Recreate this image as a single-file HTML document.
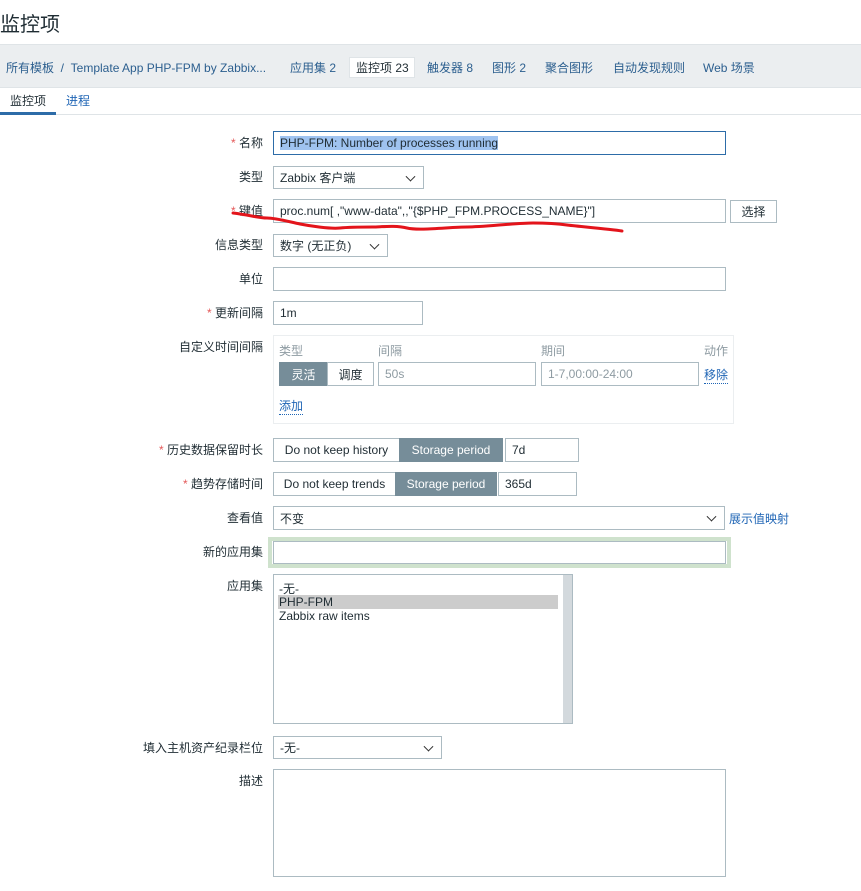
<!DOCTYPE html>
<html><head><meta charset="utf-8"><style>
*{box-sizing:border-box;margin:0;padding:0}
body{width:861px;height:891px;background:#fff;font-family:"Liberation Sans","Noto Sans CJK SC",sans-serif;font-size:12px;color:#1f2c33;position:relative;overflow:hidden}
.a{position:absolute}
.lbl{position:absolute;right:598px;text-align:right;white-space:nowrap;transform:translateY(-2px)}
.req:before{content:"* ";color:#e45959}
.in{position:absolute;border:1px solid #acbbc2;background:#fff;padding-left:6px;white-space:nowrap;display:flex;align-items:center}
.sel:after{content:"";position:absolute;right:9px;top:50%;width:6px;height:6px;border-right:1.3px solid #333;border-bottom:1.3px solid #333;transform:translateY(-70%) rotate(45deg)}
.tab{position:absolute;top:59px;color:#2c5f8f;font-size:12px}
.seg{position:absolute;display:flex;align-items:center;justify-content:center;border:1px solid #acbbc2}
.dark{background:#768d99;color:#fff;border-color:#768d99}
.lnk{color:#1f65b5;border-bottom:1px dotted #1f65b5}
.gray{color:#8e9ba2}
</style></head><body>
<div class="a" style="left:0;top:8px;font-size:20px;color:#1f2c33">监控项</div>
<div class="a" style="left:0;top:44px;width:861px;height:44px;background:#ebeef0;border-top:1px solid #dfe4e7;border-bottom:1px solid #dfe4e7"></div>
<div class="tab" style="left:6px">所有模板 &nbsp;/&nbsp; Template App PHP-FPM by Zabbix...</div>
<div class="tab" style="left:290px">应用集 2</div>
<div class="a" style="left:349px;top:57px;width:66px;height:21px;background:#fff;border:1px solid #dfe4e7"></div>
<div class="tab" style="left:356px;color:#1f2c33">监控项 23</div>
<div class="tab" style="left:427px">触发器 8</div>
<div class="tab" style="left:492px">图形 2</div>
<div class="tab" style="left:545px">聚合图形</div>
<div class="tab" style="left:613px">自动发现规则</div>
<div class="tab" style="left:703px">Web 场景</div>
<div class="a" style="left:10px;top:92px">监控项</div>
<div class="a" style="left:66px;top:92px;color:#1f65b5">进程</div>
<div class="a" style="left:0;top:114px;width:861px;height:1px;background:#dfe4e7"></div>
<div class="a" style="left:0;top:112px;width:56px;height:3px;background:#2d6ca8"></div>

<div class="lbl req" style="top:136px">名称</div>
<div class="in" style="left:273px;top:131px;width:453px;height:24px;border-color:#2d6ca8"><span style="background:#9fc3f0;color:#1f2c33">PHP-FPM: Number of processes running</span></div>
<div class="lbl" style="top:170px">类型</div>
<div class="in sel" style="left:273px;top:166px;width:151px;height:23px">Zabbix 客户端</div>
<div class="lbl req" style="top:204px">键值</div>
<div class="in" style="left:273px;top:199px;width:453px;height:24px">proc.num[ ,"www-data",,"{$PHP_FPM.PROCESS_NAME}"]</div>
<div class="seg" style="left:730px;top:200px;width:47px;height:23px">选择</div>
<div class="lbl" style="top:238px">信息类型</div>
<div class="in sel" style="left:273px;top:234px;width:115px;height:23px">数字 (无正负)</div>
<div class="lbl" style="top:272px">单位</div>
<div class="in" style="left:273px;top:267px;width:453px;height:24px"></div>
<div class="lbl req" style="top:306px">更新间隔</div>
<div class="in" style="left:273px;top:301px;width:150px;height:24px">1m</div>
<div class="lbl" style="top:340px">自定义时间间隔</div>
<div class="a" style="left:273px;top:335px;width:461px;height:89px;border:1px solid #ebeef0"></div>
<div class="a gray" style="left:279px;top:342px">类型</div>
<div class="a gray" style="left:378px;top:342px">间隔</div>
<div class="a gray" style="left:541px;top:342px">期间</div>
<div class="a gray" style="left:704px;top:342px">动作</div>
<div class="seg dark" style="left:279px;top:362px;width:49px;height:24px">灵活</div>
<div class="seg" style="left:327px;top:362px;width:47px;height:24px">调度</div>
<div class="in gray" style="left:378px;top:362px;width:158px;height:24px">50s</div>
<div class="in gray" style="left:541px;top:362px;width:158px;height:24px">1-7,00:00-24:00</div>
<div class="a lnk" style="left:704px;top:366px">移除</div>
<div class="a lnk" style="left:279px;top:397px">添加</div>

<div class="lbl req" style="top:443px">历史数据保留时长</div>
<div class="seg" style="left:273px;top:438px;width:127px;height:24px">Do not keep history</div>
<div class="seg dark" style="left:399px;top:438px;width:104px;height:24px">Storage period</div>
<div class="in" style="left:505px;top:438px;width:74px;height:24px">7d</div>
<div class="lbl req" style="top:477px">趋势存储时间</div>
<div class="seg" style="left:273px;top:472px;width:123px;height:24px">Do not keep trends</div>
<div class="seg dark" style="left:395px;top:472px;width:102px;height:24px">Storage period</div>
<div class="in" style="left:498px;top:472px;width:79px;height:24px">365d</div>
<div class="lbl" style="top:511px">查看值</div>
<div class="in sel" style="left:273px;top:506px;width:452px;height:24px">不变</div>
<div class="a" style="left:729px;top:510px;color:#1f65b5">展示值映射</div>
<div class="lbl" style="top:545px">新的应用集</div>
<div class="a" style="left:268px;top:537px;width:463px;height:31px;border:4px solid #cfe2cd"></div>
<div class="in" style="left:273px;top:541px;width:453px;height:23px"></div>
<div class="lbl" style="top:579px">应用集</div>
<div class="a" style="left:273px;top:574px;width:300px;height:150px;border:1px solid #acbbc2;background:#fff"></div>
<div class="a" style="left:563px;top:575px;width:9px;height:148px;background:#d3d9dd"></div>
<div class="a" style="left:279px;top:580px">-无-</div>
<div class="a" style="left:278px;top:595px;width:280px;height:14px;background:#cccccc"></div>
<div class="a" style="left:279px;top:595px">PHP-FPM</div>
<div class="a" style="left:279px;top:609px">Zabbix raw items</div>
<div class="lbl" style="top:741px">填入主机资产纪录栏位</div>
<div class="in sel" style="left:273px;top:736px;width:169px;height:23px">-无-</div>
<div class="lbl" style="top:774px">描述</div>
<div class="a" style="left:273px;top:769px;width:453px;height:108px;border:1px solid #acbbc2"></div>

<svg class="a" style="left:0;top:0" width="861" height="891"><path d="M233 213 C250 215,258 218,267 218 S290 222,300 224 S330 229,340 228 S365 227,373 227 S395 225,407 228 S450 227,467 227 S515 223,533 223 S560 224,567 225 S610 229,622 231" fill="none" stroke="#e3141b" stroke-width="3" stroke-linecap="round"/></svg>
</body></html>
